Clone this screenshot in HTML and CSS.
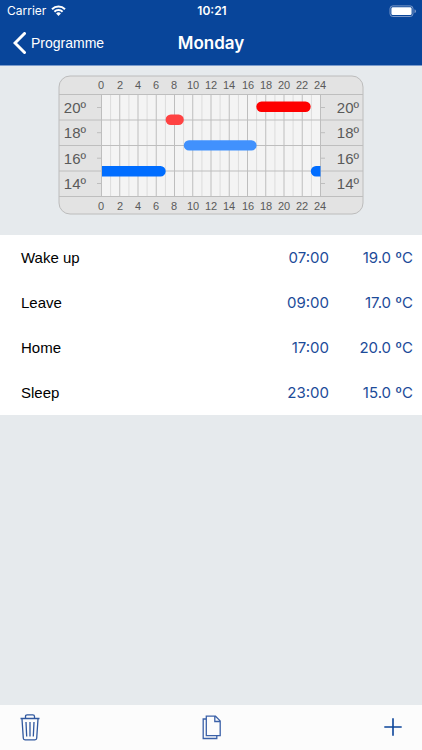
FILE: index.html
```html
<!DOCTYPE html>
<html lang="en">
<head>
<meta charset="utf-8">
<meta name="viewport" content="width=device-width, initial-scale=1">
<title>Monday</title>
<link rel="stylesheet" href="styles.css">
</head>
<body>
<header class="top">
  <div class="status">
    <span class="carrier">Carrier
      <svg width="15" height="11" viewBox="0 0 15 11" aria-hidden="true"><g fill="none" stroke="#fff" stroke-width="2"><path d="M1 4.2a9.2 9.2 0 0 1 13 0"/><path d="M3.4 6.8a5.8 5.8 0 0 1 8.2 0"/></g><path fill="#fff" d="M7.5 11 5.1 8.5a3.5 3.5 0 0 1 4.8 0z"/></svg>
    </span>
    <span class="clock">10:21</span>
    <svg class="battery" width="28" height="12" viewBox="0 0 28 12" aria-hidden="true"><rect x="1" y=".9" width="23" height="10.6" rx="2.8" fill="none" stroke="#7b98c8"/><rect x="2.4" y="2.3" width="20.2" height="7.8" rx="1.4" fill="#fff"/><path fill="#7b98c8" d="M25.5 4.2q1.5.5 1.5 2t-1.5 2z"/></svg>
  </div>
  <nav class="nav">
    <a class="back" href="#programme">
      <svg width="13" height="22" viewBox="0 0 13 22" aria-hidden="true"><path d="M11.5 1.5 2 11l9.500 9.500" fill="none" stroke="#fff" stroke-width="3" stroke-linecap="round"/></svg>
      Programme
    </a>
    <h1>Monday</h1>
  </nav>
</header>
<main>
  <section class="schedule">
    <svg class="chart" width="306" height="140" viewBox="0 0 306 140" role="img" aria-label="Temperature by hour">
      <rect x="1" y="1" width="304" height="138" rx="11" fill="#e3e3e3" stroke="#bcbcbc"/>
      <rect x="43.500" y="19.500" width="219" height="102" fill="#f4f4f4"/>
      <path stroke="#dcdcdc" d="M52.600 20v101M70.900 20v101M89.100 20v101M107.400 20v101M125.600 20v101M143.900 20v101M162.100 20v101M180.400 20v101M198.600 20v101M216.900 20v101M235.100 20v101M253.400 20v101"/>
      <path stroke="#bebebe" d="M43.500 20v101M61.750 20v101M80 20v101M98.250 20v101M116.500 20v101M134.750 20v101M153 20v101M171.250 20v101M189.500 20v101M207.750 20v101M226 20v101M244.250 20v101M262.500 20v101M1 19.500h304M1 45h304M1 70.500h304M1 96h304M1 121.500h304M39 32.500h4M39 57.700h4M39 83.200h4M39 108.500h4M263 32.500h4M263 57.700h4M263 83.200h4M263 108.500h4"/>
      <g fill="none" stroke-width="10.400" stroke-linecap="round">
        <path stroke="#fe0000" d="M203.500 31.800h44"/>
        <path stroke="#ff4242" d="M112.800 44.800h7.800"/>
        <path stroke="#4191fd" d="M131 70.400h62.400"/>
      </g>
      <path fill="#006dff" d="M44 91h58.500a5.200 5.200 0 0 1 0 10.400H44zM262.500 91H258a5.200 5.200 0 0 0 0 10.400h4.500z"/>
      <g class="hours">
        <text x="43" y="14">0</text><text x="62" y="14">2</text><text x="80" y="14">4</text><text x="98" y="14">6</text><text x="116" y="14">8</text><text x="135" y="14">10</text><text x="153" y="14">12</text><text x="171" y="14">14</text><text x="190" y="14">16</text><text x="208" y="14">18</text><text x="226" y="14">20</text><text x="244" y="14">22</text><text x="262" y="14">24</text>
        <text x="43" y="135">0</text><text x="62" y="135">2</text><text x="80" y="135">4</text><text x="98" y="135">6</text><text x="116" y="135">8</text><text x="135" y="135">10</text><text x="153" y="135">12</text><text x="171" y="135">14</text><text x="190" y="135">16</text><text x="208" y="135">18</text><text x="226" y="135">20</text><text x="244" y="135">22</text><text x="262" y="135">24</text>
      </g>
      <g class="degrees">
        <text x="28" y="38">20º</text><text x="28" y="63">18º</text><text x="28" y="89">16º</text><text x="28" y="114">14º</text>
        <text x="301" y="38">20º</text><text x="301" y="63">18º</text><text x="301" y="89">16º</text><text x="301" y="114">14º</text>
      </g>
    </svg>
  </section>
  <table class="periods">
    <tbody>
      <tr><th scope="row">Wake up</th><td class="time">07:00</td><td class="temp">19.0 ºC</td></tr>
      <tr><th scope="row">Leave</th><td class="time">09:00</td><td class="temp">17.0 ºC</td></tr>
      <tr><th scope="row">Home</th><td class="time">17:00</td><td class="temp">20.0 ºC</td></tr>
      <tr><th scope="row">Sleep</th><td class="time">23:00</td><td class="temp">15.0 ºC</td></tr>
    </tbody>
  </table>
</main>
<footer class="tools">
  <button type="button" aria-label="Delete"><svg width="20" height="27" viewBox="0 0 20 27"><g fill="none" stroke="#30589f" stroke-width="1.300"><path d="M.5 4.500h19M5.500 4.300V2.500Q5.500.8 7.200.8h5.600q1.700 0 1.700 1.700v1.800M2 5l1.300 19.300q.1 1.500 1.700 1.500h10q1.600 0 1.700-1.500L18 5M6 8l.7 14.500M10 8v14.500M14 8l-.7 14.500"/></g></svg></button>
  <button type="button" aria-label="Copy"><svg width="20" height="25" viewBox="0 0 20 25"><g fill="none" stroke="#3b61a8" stroke-width="1.300"><path d="M4 4H1.200v19.500h13.600V21"/><path d="M4.300 1.200h9.200l4.700 4.700v14.800H4.300zM12.800 1.500v5h5.200"/></g></svg></button>
  <button type="button" aria-label="Add"><svg width="18" height="18" viewBox="0 0 18 18"><path d="M9 .3v17.400M.3 9h17.400" stroke="#0b4499" stroke-width="1.600"/></svg></button>
</footer>
</body>
</html>
```
FILE: styles.css
```css
* {
  box-sizing: border-box;
}

body {
  margin: 0;
  min-height: 100vh;
  display: flex;
  flex-direction: column;
  background: #e6eaed;
  color: #000;
  font-family: "Liberation Sans", sans-serif;
}

.top {
  background: #08459a;
  border-bottom: 1px solid #7b9bcb;
  color: #fff;
}

.status,
.nav {
  display: grid;
  grid-template-columns: 1fr auto 1fr;
  align-items: center;
}

.status {
  height: 21px;
  padding: 0 5px 0 7px;
  font: 12px Inter, sans-serif;
}

.carrier,
.back {
  display: flex;
  align-items: center;
  gap: 5px;
}

.clock {
  font-weight: 600;
}

.battery {
  justify-self: end;
}

.nav {
  height: 44px;
  padding: 0 13px;
}

.back {
  color: #fff;
  font-size: 14px;
  text-decoration: none;
}

.nav h1 {
  margin: 0;
  font: 600 17px Inter, sans-serif;
}

main {
  flex: 1;
}

.schedule {
  display: flex;
  justify-content: center;
  padding: 9px 0 20px;
}

.hours,
.degrees {
  fill: #5a5a5a;
}

.hours {
  font-size: 11px;
  text-anchor: middle;
}

.degrees {
  font-size: 15px;
  text-anchor: end;
}

.periods {
  width: 100%;
  border-collapse: collapse;
  background: #fff;
}

.periods tr {
  height: 45px;
}

.periods th,
.periods td {
  padding: 0;
}

.periods th {
  padding-left: 21px;
  font-size: 15px;
  font-weight: 400;
  text-align: left;
}

.periods td {
  color: #1c4b99;
  font: 15px Inter, sans-serif;
  text-align: right;
}

.periods .temp {
  width: 93px;
  padding-right: 9px;
}

.tools {
  display: flex;
  justify-content: space-between;
  align-items: center;
  height: 45px;
  padding: 0 20px 1px;
  background: #fcfcfc;
}

.tools button {
  display: flex;
  padding: 0;
  border: 0;
  background: none;
}
```
